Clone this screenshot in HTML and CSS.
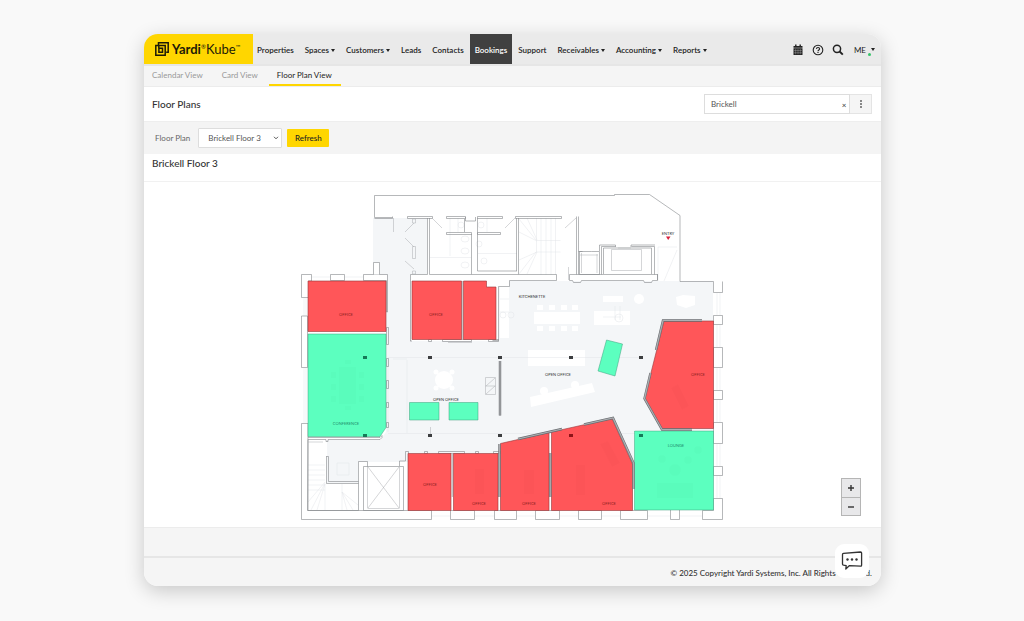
FILE: index.html
```html
<!DOCTYPE html>
<html lang="en">
<head>
<meta charset="utf-8">
<title>Yardi Kube – Floor Plan View</title>
<meta name="viewport" content="width=device-width, initial-scale=1">
<link rel="stylesheet" href="styles.css">
</head>
<body>
<div class="app">
  <header class="topbar">
    <a class="brand" href="#" aria-label="Yardi Kube">
      <svg class="brand-mark" viewBox="0 0 14 14" aria-hidden="true"><path d="M3.5 3V.8h9.7v9.4h-2M.8 3.5h9.4v9.7H.8zM3.8 6.2V3.6M3.9 6.2h3.6v4H3.9z" fill="none" stroke="#1d1a08" stroke-width="1.5"/></svg>
      <span class="brand-name"><b>Yardi</b><sup>®</sup>Kube<sup>™</sup></span>
    </a>
    <nav class="nav" aria-label="Main">
      <a href="#">Properties</a>
      <a href="#" class="has-menu">Spaces</a>
      <a href="#" class="has-menu">Customers</a>
      <a href="#">Leads</a>
      <a href="#">Contacts</a>
      <a href="#" class="current" aria-current="page">Bookings</a>
      <a href="#">Support</a>
      <a href="#" class="has-menu">Receivables</a>
      <a href="#" class="has-menu">Accounting</a>
      <a href="#" class="has-menu">Reports</a>
    </nav>
    <div class="tools">
      <button type="button" aria-label="Calendar"><svg class="icon" viewBox="0 0 12 12"><path d="M1.500 2h1.600V.6h1.400V2h3V.6h1.400V2h1.600v1.800h-9zM1.500 4.200h9V11h-9z" fill="#222"/><path d="M3.700 5V10.300M6 5V10.300M8.300 5V10.300M2 6.600h8M2 8.800h8" stroke="#eaeaea" stroke-width=".3"/></svg></button>
      <button type="button" aria-label="Help"><svg class="icon" viewBox="0 0 12 12" fill="none" stroke="#222"><circle cx="6" cy="6" r="4.800" stroke-width="1.100"/><path d="M4.400 4.900C4.500 3.100 7.600 3.100 7.600 4.900 7.600 6 6 6 6 7.200" stroke-width="1.100"/><path d="M6 8v1.100" stroke-width="1.200"/></svg></button>
      <button type="button" aria-label="Search"><svg class="icon" viewBox="0 0 12 12" fill="none" stroke="#222"><circle cx="5" cy="4.800" r="3.600" stroke-width="1.500"/><path d="M7.600 7.500l3.200 3.200" stroke-width="1.900"/></svg></button>
      <button type="button" class="user has-menu"><span>ME</span><i class="status"></i></button>
    </div>
  </header>

  <nav class="tabs" aria-label="Booking views">
    <a href="#">Calendar View</a>
    <a href="#">Card View</a>
    <a href="#" class="active" aria-current="page">Floor Plan View</a>
  </nav>

  <section class="page-head">
    <h1>Floor Plans</h1>
    <div class="property">
      <div class="property-box">
        <input type="text" value="Brickell" aria-label="Property">
        <button type="button" class="clear" aria-label="Clear">×</button>
      </div>
      <button type="button" class="more" aria-label="More options"><svg viewBox="0 0 4 10" width="4" height="10"><path d="M1 1h2v2H1zM1 4h2v2H1zM1 7h2v2H1z" fill="#888"/></svg></button>
    </div>
  </section>

  <form class="filters">
    <label for="plan">Floor Plan</label>
    <div class="select">
      <select id="plan"><option>Brickell Floor 3</option></select>
      <svg class="chevron" viewBox="0 0 6 4"><path d="M1 .8l2 2 2-2" fill="none" stroke="#444" stroke-width=".9"/></svg>
    </div>
    <button type="button" class="refresh">Refresh</button>
  </form>

  <h2 class="plan-title">Brickell Floor 3</h2>

  <main class="stage">
    <svg class="plan" viewBox="144 182 737 345" role="img" aria-label="Brickell Floor 3 plan">
      <!-- floor area -->
      <path class="floor" d="M373 218h54v56.500h-17V281h88v60h1V287h10v-6h204v149h-79v32l-22-44-111 27v8h-93v9h-50v21h-31v-43h53l6-8V281h1v-6h-14z"/>

      <!-- furniture -->
      <g class="white">
        <path d="M411 281h87v60h-87zM534 312h46v12h-46zM594 311h36v14h-36zM603 296h20v6h-20zM528 350h57v16h-57zM530 397l62-14 3 9-64 15zM676 297l7-2 12 1v9l-9 3-9-3zM500 287h9v51h-9z"/>
        <circle cx="639" cy="299" r="5"/><circle cx="444" cy="380" r="9"/>
        <circle cx="436" cy="372" r="2.500"/><circle cx="452" cy="372" r="2.500"/><circle cx="436" cy="388" r="2.500"/><circle cx="452" cy="388" r="2.500"/>
        <circle cx="544" cy="391" r="4"/><circle cx="575" cy="385" r="4"/>
        <path d="M537 305h6v5h-6zM549 305h6v5h-6zM561 305h6v5h-6zM572 305h6v5h-6zM537 326h6v5h-6zM549 326h6v5h-6zM561 326h6v5h-6zM572 326h6v5h-6z"/>
      </g>
      <g class="faint">
        <path d="M388 357.500h253M388 360v72M407 360v73M388 433.500h310M393 359h14M450 218v38M430 257.500h41M478 253.500h39M458 218v14M487 218v14"/>
        <path d="M536.500 218v22M541 218v22M546 218v22M551 218v22M555.500 218v22M536.500 240.500h24M536.500 252h24M536.500 240v12M541 240v35M546 240v35M551 240v35M555.500 240v35M519 219l17 21M527 218l10 22M519 232l18 9M519 274l17-22M527 274l10-22M519 260l18-8"/>
        <ellipse cx="465" cy="239" rx="4" ry="3"/><ellipse cx="465" cy="251" rx="4" ry="3"/><ellipse cx="465" cy="265" rx="4" ry="3"/><circle cx="461" cy="225" r="3"/><circle cx="481" cy="225" r="3"/><circle cx="479" cy="244" r="3"/><circle cx="484" cy="261" r="3"/>
        <path d="M308 465h17M308 470h17M308 475h17M308 480h17M308 485h17M308 490h17M325 482l-17 20M325 483l-14 27M325 484l-8 26M325 484v26M342 484v26M342 492l5 18M342 492l11 18M342 492l16 13M337 463h12v12h-12z"/>
        <path d="M658 247h19M658 247v34M677 250L664 281M304 298v18M306 298v18M304 368v55M306 368v55M717 293v22M720 293v22M717 325v22M720 325v22M717 368v22M720 368v22M717 400v22M720 400v22M717 444v22M720 444v22M717 476v22M720 476v22M312 277h18M345 277h18M432 516h18M475 516h19M517 516h18M560 516h18M602 516h18M647 516h23M680 516h22M500 299h9M500 312h9M603 317h18M615 306v14M620 306v14"/>
        <circle cx="503" cy="315" r="3"/><circle cx="511" cy="315" r="3"/><circle cx="619" cy="318" r="4"/>
      </g>

      <!-- outer and inner walls -->
      <g class="wall">
        <path d="M392.500 217.500h-18v-22h240v-1h35l30.500 21v66H713.500M374.500 218.500h18v-2M407.500 216.500h25v2h-25zM446.500 216.500h19v2h-19zM465.500 217v4h10v-4M477.500 216.500h25v2h-25zM446.500 232.500h25v2h-25zM477.500 232.500h23v2h-23zM427.500 218v56.500M429.500 218v56.500M464.500 219v13M471.500 234v40.500M477.500 218v53h39.500M516.500 218v53M518.500 218v56.500M515.500 216.500h46v2h-46zM576.500 216.500v58M578.500 216.500v58"/>
        <path d="M410.500 341V274.500h17M429.500 274.500h42M518.500 274.500h38v6h-47v6h-11v54h-6M412 341h-2M569.500 274.500h88v6h-5l-1 2h-7l-1-2h-62l-1 2h-7l-1-2h-3zM657.500 274v6"/>
        <path d="M471.500 274.500h47M578.500 251.500h4M591.500 251.500h8v23h-20v-23zM601.500 274.500v-28h14M631.500 246.500h23v28M603.500 274v-26h48v26M599.500 251v-6h16v2M631 247v-2h24"/>
        <path d="M311.500 281h-3v16.500h-7v-23h10zM330.500 274.500h14v6h-14zM387.500 312v-37.500h-24v6h23V312zM301.500 367.500V316h6v51.500zM308 423.500h-6.500v96h130v-9h-124zM386.500 327.500h2v17h-2zM386.500 358.500h2v8h-2zM386.500 380.500h2v8h-2zM386.500 402.500h2v5h-2zM386.500 422.500h2v5h-2z"/>
        <path class="solid" d="M373.500 274.500v-12h6v12"/>
        <path d="M308 437.500h72l2-2v2l-2 2h-52v2h-2v-2h-18v71h50.500v-49h9v5.500M326.500 456.500h2v25h30M326.500 456v27.500h32M363.500 466.500h40v44h-40zM399.500 466v-5h6v-9.500h3v2"/>
        <path d="M713.500 281.500v11h9v-11M713.500 315.500h9v9h-9zM713.500 347.500h9v20h-9zM713.500 390.500h9v9h-9zM713.500 422.500h9v21h-9zM713.500 466.500h9v9h-9zM713.500 498.500h9v21h-20v-9h11z"/>
        <path d="M450.500 510.500h24v9h-24zM494.500 510.500h22v9h-22zM535.500 510.500h24v9h-24zM578.500 510.500h23v9h-23zM620.500 510.500h27v9h-27zM670.500 509.500h9v10h-9z"/>
        <path d="M424.500 451.500h3v2h-3zM438.500 451.500h26v2h-26zM475.500 451.500h3v2h-3zM493.500 451.500h7v2h-7zM428.500 339.500h3v2h-3zM442.500 339.500h29v2h-29zM488.500 339.500h10v2h-10zM462.300 281v58M452.300 454v43"/>
      </g>
      <g class="detail">
        <path d="M393.500 218v14M414 223l-9 9M405 238l9 9M414 269l-9-8M412.500 219h3v4h-3zM412.500 246.500h3v12h-3zM412.500 271h3v3h-3zM432 218l10 10M515 218l-10 10M576 218l-11 10M568.500 267v13M611.500 249.500h30v21h-30zM618 248h13M581.500 253v20M597 254v19M580 255h18M448 342.500h24"/>
        <path d="M367.500 466v42M399.500 466v42M367.500 508.500h32M368 467l31 41M399 467l-31 41M308 442h15M430.500 427v8M485.500 377.500h10v17h-10zM485.500 386h10M486 386l9-8M486 394l9-8"/>
      </g>

      <!-- bookable spaces -->
      <g class="booked">
        <path d="M308 281h78v50.500h-78zM412 281h49.500v58.500H412zM463.500 281h23v6h9.500v52.500h-32.500z"/>
        <path d="M664 321h49.500v107.500H662L644.500 398.500z"/>
        <path d="M408 453.500h43v57h-43zM453.500 453.500H498v57h-44.500zM500.500 443.500l48.500-11v78h-48.500zM551.500 432l60.500-13.500 20.500 45.500v46.500h-81z"/>
      </g>
      <g class="free">
        <path d="M308 334h78v93.500l-6 9h-72zM634.500 431h79v79h-79zM606.500 340l16 4-7.500 32-17-5zM409.500 402.500h29.500v17.500h-29.500zM449 402.500h29v17.500h-29z"/>
      </g>
      <g class="shade">
        <path d="M339 367h17v37h-17zM331 372h5v6h-5zM331 384h5v6h-5zM331 396h5v6h-5zM359 372h5v6h-5zM359 384h5v6h-5zM359 396h5v6h-5zM345 360h6v4h-6zM345 406h6v4h-6zM475 469h9v25h-9zM524 470h10v24h-10zM576 465h9v30h-9zM657 483h36v15h-36zM671 388l7-4 11 22-7 4zM600 444l8-3 12 22-8 4z"/>
        <circle cx="675" cy="470" r="6"/><circle cx="662" cy="459" r="4"/><circle cx="688" cy="460" r="4"/><circle cx="698" cy="450" r="4"/>
      </g>

      <!-- glazed partitions -->
      <g class="glass-edge"><path d="M518 439l44-10M584 424.500l29-6.500 20.500 45v26M550.300 453v44M500 361v54.500M499.500 444v53M656 350l7-29.500h39M650.500 373l-6 25.500 17.500 31h30"/></g>
      <g class="glass"><path d="M518 439l44-10M584 424.500l29-6.500 20.500 45v26M550.300 453v44M500 361v54.500M499.500 444v53M656 350l7-29.500h39M650.500 373l-6 25.500 17.500 31h30"/></g>

      <g class="column">
        <path d="M428 356h4v3h-4zM498 356h4v3h-4zM569 356h4v3h-4zM639 356h4v3h-4zM428 434h4v3h-4zM498 434h4v3h-4z"/>
        <path class="covered" d="M363 356h4v3h-4zM363 434h4v3h-4zM639 434h4v3h-4z"/>
        <path class="covered-red" d="M569 434h4v3h-4z"/>
      </g>
      <path d="M666 236.500h4.500l-2.300 3.500z" fill="#d9213c"/>

      <g class="label">
        <text x="668" y="235">ENTRY</text>
        <text x="532" y="298">KITCHENETTE</text>
        <text x="558" y="376">OPEN OFFICE</text>
        <text x="446" y="401">OPEN OFFICE</text>
      </g>
      <g class="label on-red">
        <text x="346" y="316">OFFICE</text><text x="436" y="316">OFFICE</text><text x="698" y="376">OFFICE</text>
        <text x="430" y="486">OFFICE</text><text x="479" y="505">OFFICE</text><text x="529" y="505">OFFICE</text><text x="609" y="505">OFFICE</text>
      </g>
      <g class="label on-green">
        <text x="346" y="425">CONFERENCE</text><text x="676" y="447">LOUNGE</text>
      </g>
    </svg>
    <div class="zoom">
      <button type="button" aria-label="Zoom in"><svg viewBox="0 0 8 8"><path d="M4 1v6M1 4h6" stroke="#333" stroke-width="1.400"/></svg></button>
      <button type="button" aria-label="Zoom out"><svg viewBox="0 0 8 8"><path d="M1 4h6" stroke="#333" stroke-width="1.400"/></svg></button>
    </div>
  </main>

  <div class="spacer"></div>
  <footer class="footer">© 2025 Copyright Yardi Systems, Inc. All Rights Reserved.</footer>
  <button type="button" class="chat" aria-label="Chat">
    <svg viewBox="0 0 22 20"><path d="M1.500 3.500Q1.500 2.500 2.500 2.400L19.500 1Q20.600 1 20.600 2V14Q20.600 15.300 19.500 15.200L8.500 14.600 4.800 18 5.200 14.600 2.500 14.200Q1.500 14 1.500 13z" fill="#fff" stroke="#333" stroke-width="1.300" stroke-linejoin="round"/><circle cx="6.500" cy="8.500" r="1.200"/><circle cx="11" cy="8.500" r="1.200"/><circle cx="15.500" cy="8.500" r="1.200"/></svg>
  </button>
</div>
</body>
</html>
```
FILE: styles.css
```css
*{box-sizing:border-box}
body{margin:0;padding:34px 143px 34px 144px;background:#f9f9f9;color:#333;font-family:Lato,"Open Sans",sans-serif;font-size:8px;line-height:12px}
button,input,select{font:inherit;color:inherit;margin:0;padding:0;border:0;background:none}
a{color:inherit;text-decoration:none}
h1,h2{margin:0;font-size:10px;line-height:14px;font-weight:500}

.app{position:relative;border-radius:14px;background:#fff;box-shadow:0 5px 20px rgba(0,0,0,.2);display:flex;flex-direction:column}

.topbar{display:flex;height:32px;background:#eaeaea;border-bottom:2px solid #e6e6e6;border-radius:14px 14px 0 0;padding-right:6px}
.brand{display:flex;align-items:center;gap:3px;width:109px;padding-left:11px;background:#ffd600;border-top-left-radius:14px;color:#1d1a08}
.brand-mark{width:14px;height:14px}
.brand-name{font-size:13px;line-height:16px;white-space:nowrap}
.brand-name sup{font-size:6px;line-height:6px;vertical-align:5px}
.nav{display:flex;gap:1px;font-weight:600;color:#222}
.nav a{display:flex;align-items:center;padding:2px 5px 0}
.nav a:first-child{padding-left:4px}
.nav .current{background:#404040;color:#fff}
.has-menu::after{content:"";margin-left:2px;border:2px solid transparent;border-top:3px solid #222;border-bottom:0}
.tools{display:flex;align-items:center;gap:8px;margin-left:auto;padding-top:1px;color:#222}
.tools button{display:flex;align-items:center}
.icon{width:12px;height:12px}
.user{position:relative;padding-left:2px}
.user.has-menu::after{margin-left:5px}
.status{position:absolute;right:4px;bottom:0;width:3px;height:3px;border-radius:50%;background:#35c46a}

.tabs{display:flex;height:21px;background:#f5f5f5;border-bottom:1px solid #ececec;color:#999}
.tabs a{padding:3px 9px 0 8px;margin-right:2px}
.tabs .active{color:#222;border-bottom:2px solid #ffd600}

.page-head{display:flex;align-items:center;justify-content:space-between;height:34px;padding:0 9px 0 8px}
.property{display:flex;height:20px}
.property-box{display:flex;width:146px;border:1px solid #ddd}
.property input{flex:1;min-width:0;padding-left:6px;outline:0;color:#555}
.clear{width:10px;padding-top:2px}
.more{display:flex;align-items:center;justify-content:center;width:22px;background:#f5f5f5;border:1px solid #e4e4e4;border-left:0}

.filters{display:flex;align-items:center;height:33px;padding-left:11px;background:#f4f4f4;border-top:1px solid #eee;color:#666}
.select{position:relative;margin:0 5px 0 8px}
.select select{width:84px;height:20px;padding-left:9px;appearance:none;background:#fff;border:1px solid #ddd;border-radius:1px;color:#555}
.chevron{position:absolute;right:3px;top:8px;width:6px;height:4px;pointer-events:none}
.refresh{width:42px;height:18px;background:#ffd600;border-radius:1px;color:#222;font-weight:500}
.plan-title{padding:2px 8px 11px;border-bottom:1px solid #f1f1f1}

.stage{position:relative}
.plan{display:block;width:100%;height:auto}
.zoom{position:absolute;right:20px;bottom:11px;width:20px;border:1px solid #b5b5b5;background:#e8e8ea}
.zoom button{display:flex;align-items:center;justify-content:center;width:100%;height:18px}
.zoom button + button{border-top:1px solid #b5b5b5}
.zoom svg{width:8px;height:8px}

.floor{fill:#f4f6f8}
.white{fill:#fff}
.faint{fill:none;stroke:#e3e5e8;stroke-width:.5px}
.wall{fill:none;stroke:#85888c;stroke-width:.6px}
.solid{fill:#fff}
.detail{fill:none;stroke:#aaadb0;stroke-width:.5px}
.booked{fill:#ff5659;stroke:#96373a;stroke-width:.6px}
.free{fill:#5cffbf;stroke:#3f9f7c;stroke-width:.5px}
.shade{fill:rgba(0,0,0,.01)}
.glass-edge{fill:none;stroke:#6b6e72;stroke-width:2.400px}
.glass{fill:none;stroke:#adafb2;stroke-width:1.200px}
.column{fill:#3c3e40}
.covered{fill:#167a58}
.covered-red{fill:#8f1418}
.label{fill:#333;font-family:Lato,sans-serif;font-size:4px;text-anchor:middle}
.on-red{fill:#8f1f22}
.on-green{fill:#22906b}

.spacer{height:29px;background:#f5f5f5;border-top:1px solid #ececec}
.footer{padding:9px 9px 7px;background:#f5f5f5;border-top:2px solid #e6e6e6;border-radius:0 0 14px 14px;text-align:right;font-weight:500}
.chat{position:absolute;right:12px;bottom:8px;display:flex;align-items:center;justify-content:center;width:34px;height:34px;background:#fff;border-radius:9px}
.chat svg{width:22px;height:20px;fill:#333}
```
